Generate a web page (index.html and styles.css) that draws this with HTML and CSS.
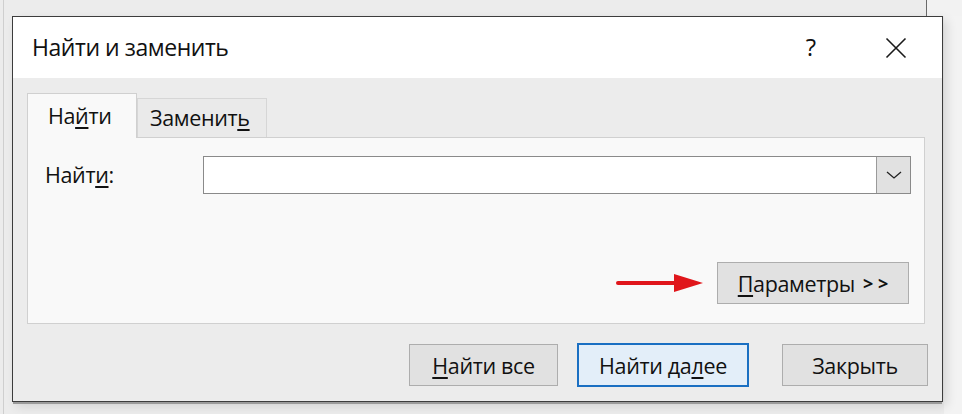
FILE: index.html
```html
<!DOCTYPE html>
<html lang="ru">
<head>
<meta charset="utf-8">
<title>Найти и заменить</title>
<link rel="stylesheet" href="styles.css">
</head>
<body>
<div class="desk">
  <div class="dialog">
    <div class="titlebar">
      <span class="title">Найти и заменить</span>
      <span class="help">?</span>
      <span class="close">
        <svg width="22" height="22" viewBox="0 0 22 22"><path d="M1.5 1.5 L20.5 20.5 M20.5 1.5 L1.5 20.5" stroke="#1a1a1a" stroke-width="1.6" fill="none"/></svg>
      </span>
    </div>
    <div class="body">
      <div class="tabs">
        <div class="tab active">На<u>й</u>ти</div>
        <div class="tab">Заменит<u>ь</u></div>
      </div>
      <div class="panel">
        <div class="findrow">
          <label class="lbl">Найт<u>и</u>:</label>
          <div class="combo">
            <div class="field"></div>
            <div class="drop">
              <svg width="16" height="8" viewBox="0 0 16 8"><path d="M1 1 L8 7 L15 1" stroke="#222" stroke-width="1.3" fill="none"/></svg>
            </div>
          </div>
        </div>
        <div class="optrow">
          <svg class="arrow" width="88" height="22" viewBox="0 0 88 22"><path d="M2 11 L62 11" stroke="#e0161b" stroke-width="4" stroke-linecap="round"/><path d="M58 2 L87 11 L58 20 Z" fill="#e0161b"/></svg>
          <button class="btn opts"><u>П</u>араметры <b class="gt">&gt; &gt;</b></button>
        </div>
      </div>
      <div class="actions">
        <button class="btn findall"><u>Н</u>айти все</button>
        <button class="btn findnext">Найти да<u>л</u>ее</button>
        <button class="btn closebtn">Закрыть</button>
      </div>
    </div>
  </div>
</div>
</body>
</html>
```
FILE: styles.css
```css
* { box-sizing: border-box; }
html, body { margin: 0; padding: 0; }
body {
  width: 962px;
  height: 414px;
  overflow: hidden;
  background: #e6e6e6;
  font-family: "Open Sans", "Noto Sans", sans-serif;
  color: #111;
}
.desk {
  height: 414px;
  padding: 16px 0 0 12px;
  background:
    linear-gradient(to right, transparent 926px, #6a6a6a 926px, #6a6a6a 927px, #f2f2f2 927px) top left / 100% 16px no-repeat,
    linear-gradient(to right, #ececec 0, #ececec 3px, #cfcfcf 3px, #cfcfcf 4px, #ececec 4px, #ececec 944px, #f3f3f3 944px);
}
.dialog {
  width: 931px;
  height: 386px;
  border: 1px solid #3c3c3c;
  background: #ececec;
  display: flex;
  flex-direction: column;
  box-shadow: 0 3px 0 -1px #9a9a9a, 4px 4px 10px rgba(0,0,0,0.12);
}
.titlebar {
  height: 61px;
  background: #fff;
  display: flex;
  align-items: center;
  padding: 0 35px 0 19px;
}
.title {
  font-size: 23px;
  letter-spacing: -0.45px;
  flex: 1;
  padding-bottom: 2px;
}
.help {
  font-size: 24px;
  margin-right: 69px;
  padding-bottom: 2px;
}
.close { display: flex; }
.body {
  flex: 1;
  padding: 15px 16px 0 14px;
}
.tabs {
  display: flex;
  align-items: flex-end;
  height: 44px;
  position: relative;
  z-index: 1;
}
.tab {
  font-size: 21.5px;
  letter-spacing: -0.35px;
  border: 1px solid #d6d6d6;
  border-bottom: none;
  background: #eaeaea;
  height: 39px;
  width: 130px;
  padding: 4px 0 0 12px;
  margin-bottom: 0;
}
.tab.active {
  background: #f9f9f9;
  width: 110px;
  height: 45px;
  margin-bottom: -1px;
  padding: 7px 0 0 20px;
  border-color: #d0d0d0;
}
.panel {
  width: 898px;
  height: 187px;
  border: 1px solid #d0d0d0;
  background: #f9f9f9;
  padding: 18px 13px 0 17px;
  display: flex;
  flex-direction: column;
}
.findrow {
  display: flex;
  align-items: center;
  height: 38px;
}
.lbl {
  font-size: 21.5px;
  letter-spacing: -0.35px;
  width: 158px;
  padding-bottom: 1px;
}
.combo {
  flex: 1;
  display: flex;
  height: 38px;
  border: 1px solid #8a8a8a;
  background: #fff;
}
.field { flex: 1; }
.drop {
  width: 34px;
  background: #e1e1e1;
  border-left: 1px solid #9a9a9a;
  display: flex;
  align-items: center;
  justify-content: center;
}
.optrow {
  margin-top: auto;
  margin-bottom: 19px;
  display: flex;
  align-items: center;
  justify-content: flex-end;
  padding-right: 2px;
}
.arrow { margin-right: 13px; }
.btn {
  font-family: "Open Sans", "Noto Sans", sans-serif;
  font-size: 21.5px;
  letter-spacing: -0.35px;
  color: #111;
  background: #e1e1e1;
  border: 1px solid #adadad;
  height: 42px;
  padding: 0;
  margin: 0;
  display: flex;
  align-items: center;
  justify-content: center;
}
.gt { font-weight: 700; font-size: 18px; margin-left: 8px; letter-spacing: 0; }
.opts { width: 192px; }
.actions {
  display: flex;
  justify-content: flex-end;
  margin-top: 20px;
  margin-right: -2px;
}
.findall { width: 149px; }
.findnext {
  width: 172px;
  height: 44px;
  margin-top: -1px;
  margin-left: 19px;
  border: 2px solid #1a6fc2;
  background: #e3eef9;
}
.closebtn { width: 146px; margin-left: 33px; }
u { text-decoration-thickness: 1.5px; text-underline-offset: 3px; }
```
